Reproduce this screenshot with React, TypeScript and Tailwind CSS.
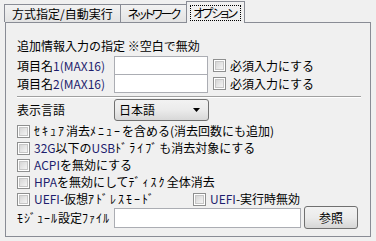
import React from "react";

const font = {
  fontFamily: '"Noto Sans CJK JP", "Noto Sans", sans-serif',
};

function Latin({ children }: { children: React.ReactNode }) {
  return <span className="text-[#1e1e6e]">{children}</span>;
}

// half-width katakana runs, spread a bit to match the narrow bitmap font
function Hw({ children, tight }: { children: React.ReactNode; tight?: boolean }) {
  return <span className={tight ? "tracking-[1px]" : "tracking-[2px]"}>{children}</span>;
}

function Check({ label }: { label: React.ReactNode }) {
  return (
    <div className="flex items-center gap-[4px]">
      <div className="flex h-[13px] w-[13px] items-center justify-center border border-[#8e8f8f] bg-white">
        <div className="h-[9px] w-[9px] border border-[#c6c6c6] bg-gradient-to-br from-[#d6d6d6] to-[#f4f4f4]" />
      </div>
      <span className="whitespace-nowrap leading-[14px]">{label}</span>
    </div>
  );
}

function Tab({ label, active, tight }: { label: string; active?: boolean; tight?: boolean }) {
  const text = tight ? "tracking-[-2px] [font-feature-settings:'palt']" : "";
  if (active) {
    return (
      <div className="relative z-10 -mb-px flex h-[22px] items-center border border-b-0 border-[#898c95] bg-[#f0f0f0] px-[3px]">
        <span className={`border border-dotted border-black pl-[2px] pr-[4px] leading-[14px] ${text}`}>{label}</span>
      </div>
    );
  }
  return (
    <div className="flex h-[18px] items-center border border-b-0 border-r-0 border-[#898c95] bg-gradient-to-b from-[#f2f2f2] to-[#e3e3e3] px-[7px] leading-[14px]">
      <span className={text}>{label}</span>
    </div>
  );
}

export default function App() {
  return (
    <div className="h-[241px] w-[376px] overflow-hidden bg-[#f0f0f0] text-[12px] text-black" style={font}>
      <div className="flex h-[22px] items-end pl-[4px] pt-[1px]">
        <Tab label="方式指定/自動実行" />
        <Tab label="ネットワーク" tight />
        <Tab label="オプション" active tight />
      </div>
      <div className="ml-[5px] flex h-[215px] w-[366px] flex-col border border-[#898c95] pl-[11px] pr-[12px]">
        <div className="mt-[14px] h-[17px] leading-[17px]">追加情報入力の指定 ※空白で無効</div>
        <div className="mt-[2px] flex flex-col">
          {["1", "2"].map((n, i) => (
            <div key={n} className={`flex h-[19px] items-center ${i ? "-mt-px" : ""}`}>
              <span className="w-[97px] whitespace-nowrap">
                項目名<Latin>{n}(MAX16)</Latin>
              </span>
              <div className="h-[19px] w-[94px] border border-[#abadb3] bg-white" />
              <div className="ml-[5px]">
                <Check label="必須入力にする" />
              </div>
            </div>
          ))}
        </div>
        <div className="mt-[3px] h-[2px] w-[344px] border-t border-b border-t-[#a0a0a0] border-b-white" />
        <div className="mt-[1px] flex h-[22px] items-center">
          <span className="w-[97px]">表示言語</span>
          <div className="flex h-[22px] w-[95px] items-center justify-between rounded-[3px] border border-[#707070] bg-gradient-to-b from-[#f2f2f2] via-[#ebebeb] to-[#d8d8d8] pl-[4px] pr-[8px]">
            <span>日本語</span>
            <svg width="7" height="4" viewBox="0 0 7 4">
              <path d="M0 0h7L3.5 4z" fill="#000" />
            </svg>
          </div>
        </div>
        <div className="mt-[3px] flex flex-col gap-[3px]">
          <Check
            label={
              <>
                <Hw>ｾｷｭｱ</Hw>消去<Hw>ﾒﾆｭｰ</Hw>を含める(消去回数にも追加)
              </>
            }
          />
          <Check
            label={
              <>
                <Latin>32G</Latin>以下の<Latin>USB</Latin>
                <Hw>ﾄﾞﾗｲﾌﾞ</Hw>も消去対象にする
              </>
            }
          />
          <Check
            label={
              <>
                <Latin>ACPI</Latin>を無効にする
              </>
            }
          />
          <Check
            label={
              <>
                <Latin>HPA</Latin>を無効にして<Hw>ﾃﾞｨｽｸ</Hw>全体消去
              </>
            }
          />
          <div className="flex">
            <div className="w-[176px]">
              <Check
                label={
                  <>
                    <Latin>UEFI</Latin>-仮想<Hw>ｱﾄﾞﾚｽﾓｰﾄﾞ</Hw>
                  </>
                }
              />
            </div>
            <Check
              label={
                <>
                  <Latin>UEFI</Latin>-実行時無効
                </>
              }
            />
          </div>
        </div>
        <div className="flex h-[23px] items-center">
          <span className="w-[97px] whitespace-nowrap">
            <Hw tight>ﾓｼﾞｭｰﾙ</Hw>設定<Hw tight>ﾌｧｲﾙ</Hw>
          </span>
          <div className="h-[20px] w-[187px] border border-[#abadb3] bg-white" />
          <div className="ml-[3px] flex h-[23px] w-[54px] items-center justify-center rounded-[3px] border border-[#707070] bg-gradient-to-b from-[#f2f2f2] via-[#ebebeb] to-[#d6d6d6]">
            参照
          </div>
        </div>
      </div>
    </div>
  );
}
